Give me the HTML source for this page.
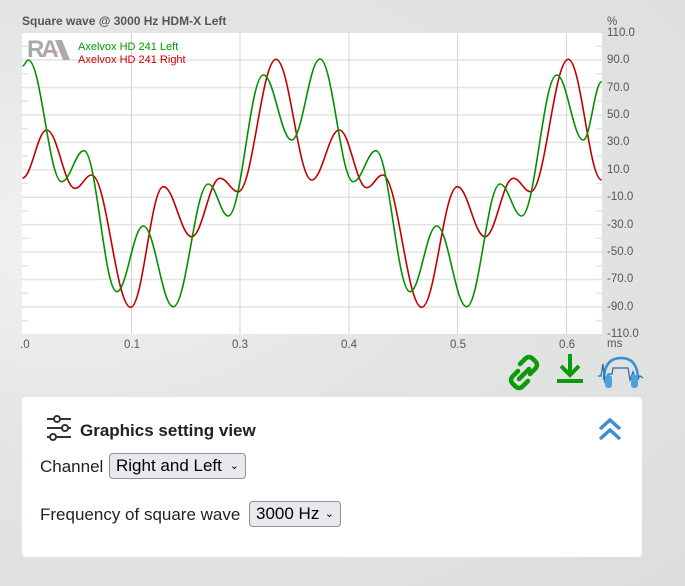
<!DOCTYPE html>
<html><head><meta charset="utf-8">
<style>
*{margin:0;padding:0;box-sizing:border-box}
body{width:685px;height:586px;overflow:hidden;background:#e6e7e7;font-family:"Liberation Sans",sans-serif;position:relative}
.bg{position:absolute;inset:0;background:radial-gradient(ellipse at 10% 40%,#f2f2f2 0,#e4e5e5 40%,#dcdddd 100%)}
.title{position:absolute;left:22px;top:14px;font-size:12px;font-weight:bold;color:#555}
.lab{position:absolute;font-size:11.5px;color:#555;line-height:11px}
.panel{position:absolute;left:22px;top:397px;width:620px;height:160px;background:#fff;border-radius:4px}
.sel{position:absolute;height:26px;background:#e9e9ed;border:1px solid #8f8f9d;border-radius:4px;font-size:17px;color:#000;line-height:24px;padding-left:6px}
.txt{position:absolute;font-size:17px;color:#222}
</style></head><body>
<div class="bg"></div>
<div class="title">Square wave @ 3000 Hz HDM-X Left</div>
<svg style="position:absolute;left:0;top:0" width="685" height="400" id="ch">
<rect x="22" y="33" width="580" height="301" fill="#fff"/>
<g id="grid" stroke="#e4e4e4" stroke-width="1.5"></g>
<g id="tick" stroke="#e4e4e4" stroke-width="1.5"></g>
<g stroke="#d4d4d4" stroke-width="1">
<line x1="131.5" y1="33" x2="131.5" y2="334"/><line x1="240" y1="33" x2="240" y2="334"/><line x1="349" y1="33" x2="349" y2="334"/><line x1="457.5" y1="33" x2="457.5" y2="334"/><line x1="566.5" y1="33" x2="566.5" y2="334"/>
</g>
<text x="27" y="57" font-family="Liberation Sans" font-weight="bold" font-size="24" fill="#aaa" letter-spacing="-3">RA</text>
<path d="M55 40 L62 40 L70 60 L63 60Z" fill="#aaa"/>
<path d="M44 52 L58 52" stroke="#e08080" stroke-width="1"/>
<text x="78" y="50" font-family="Liberation Sans" font-size="11" fill="#090">Axelvox HD 241 Left</text>
<text x="78" y="63" font-family="Liberation Sans" font-size="11" fill="#c00">Axelvox HD 241 Right</text>
<path id="gr" fill="none" stroke="#c00000" stroke-width="1.6"/>
<path id="gg" fill="none" stroke="#009000" stroke-width="1.6"/>
</svg>
<div class="lab" style="left:607px;top:17px">%</div>
<div class="lab" style="left:607px;top:28px">110.0</div>
<div class="lab" style="left:607px;top:55px">90.0</div>
<div class="lab" style="left:607px;top:83px">70.0</div>
<div class="lab" style="left:607px;top:110px">50.0</div>
<div class="lab" style="left:607px;top:137px">30.0</div>
<div class="lab" style="left:607px;top:165px">10.0</div>
<div class="lab" style="left:607px;top:192px">-10.0</div>
<div class="lab" style="left:607px;top:220px">-30.0</div>
<div class="lab" style="left:607px;top:247px">-50.0</div>
<div class="lab" style="left:607px;top:274px">-70.0</div>
<div class="lab" style="left:607px;top:302px">-90.0</div>
<div class="lab" style="left:607px;top:329px">-110.0</div>
<div class="lab" style="left:607px;top:339px">ms</div>
<div class="lab" style="left:20px;top:340px">.0</div>
<div class="lab" style="left:124px;top:340px">0.1</div>
<div class="lab" style="left:232px;top:340px">0.3</div>
<div class="lab" style="left:341px;top:340px">0.4</div>
<div class="lab" style="left:450px;top:340px">0.5</div>
<div class="lab" style="left:559px;top:340px">0.6</div>
<svg style="position:absolute;left:500px;top:350px" width="145" height="45">
<g fill="none" stroke="#0a9a0a" stroke-width="4.5" stroke-linecap="round">
<path d="M20 14 L25 9 Q29 5 33 9 L35 11 Q39 15 35 19 L30 24"/>
<path d="M18 21 L13 26 Q9 30 13 34 L15 36 Q19 40 23 36 L28 31"/>
<path d="M19 29 L29 19"/>
</g>
<g stroke="#0a9a0a" stroke-width="4" fill="none"><path d="M70 4 V24 M61 16 L70 25 L79 16"/><path d="M57 31 H83"/></g>
<g fill="none" stroke="#3b8fd0" stroke-width="2.5"><path d="M104 30 Q104 8 121 8 Q138 8 138 30"/></g>
<path d="M98 26 L101 26 L103 14 L105 33 L108 24 L112 24 L113 18 L128 18 L130 30 L133 22 L136 30 L140 26 L143 28" fill="none" stroke="#2a6ea8" stroke-width="1.3"/>
<rect x="105" y="25" width="7" height="13" rx="3" fill="#4aa3e0"/><rect x="131" y="25" width="7" height="13" rx="3" fill="#4aa3e0"/>
</svg>
<div class="panel">
<svg style="position:absolute;left:24px;top:18px" width="26" height="26" fill="none" stroke="#333" stroke-width="2">
<path d="M1 4H8M14 4H25M1 13H16M22 13H25M1 22H4M10 22H25"/>
<circle cx="11" cy="4" r="3"/><circle cx="19" cy="13" r="3"/><circle cx="7" cy="22" r="3"/>
</svg>
<div style="position:absolute;left:58px;top:24px;font-size:17px;font-weight:bold;color:#222">Graphics setting view</div>
<svg style="position:absolute;left:576px;top:20px" width="26" height="24" fill="none" stroke="#3b8fd0" stroke-width="3.5"><path d="M2 12 L12 3 L22 12 M2 22 L12 13 L22 22"/></svg>
<div class="txt" style="left:18px;top:60px">Channel</div>
<div class="sel" style="left:87px;top:56px;width:137px">Right and Left <span style="font-size:11px;position:absolute;right:6px;top:0">&#8964;</span></div>
<div class="txt" style="left:18px;top:108px">Frequency of square wave</div>
<div class="sel" style="left:227px;top:104px;width:92px">3000 Hz <span style="font-size:11px;position:absolute;right:6px;top:0">&#8964;</span></div>
</div>
<script>
var s='',t='';
for(var v=-90;v<=90;v+=20){var y=183.5-v*1.372;s+='<line x1="22" y1="'+y+'" x2="604" y2="'+y+'"/>';}
for(var v=-100;v<=100;v+=20){var y=183.5-v*1.372;t+='<line x1="22" y1="'+y+'" x2="28" y2="'+y+'"/><line x1="596" y1="'+y+'" x2="604" y2="'+y+'"/>';}
document.getElementById('grid').innerHTML=s;
document.getElementById('tick').innerHTML=t;
function P(a){var d='M'+a[0][0]+' '+a[0][1];for(var i=1;i<a.length;i++){var p=a[i-1],q=a[i],k=(q[0]-p[0])*0.38;d+=' C'+(p[0]+k)+' '+p[1]+' '+(q[0]-k)+' '+q[1]+' '+q[0]+' '+q[1];}return d;}
var G=[[22.5,66],[28.3,60],[61.7,181.7],[84,150.7],[116.7,291.7],[143.3,226],[173.3,306.7],[208.3,184],[228.3,216],[263.3,75],[291.7,140],[320,59],[353.3,181.7],[376,150.7],[410,291.7],[436.7,226],[466.7,306.7],[500,184],[521.7,216],[556.7,75],[583.3,140],[601.7,81.7]];
var R=[[22.5,178],[46.7,130],[75,188.3],[91.7,175],[130.7,307.3],[163.3,186.7],[191.7,236.7],[220,178.3],[238.3,191.7],[276,59.3],[311.7,180],[339.3,130],[366.7,187.7],[382.7,175],[421.7,307.3],[457.3,186.7],[485,236.7],[513.3,178.3],[530.7,191.7],[568.3,59.3],[601.7,180]];
document.getElementById('gg').setAttribute('d',P(G));
document.getElementById('gr').setAttribute('d',P(R));
</script>
</body></html>
